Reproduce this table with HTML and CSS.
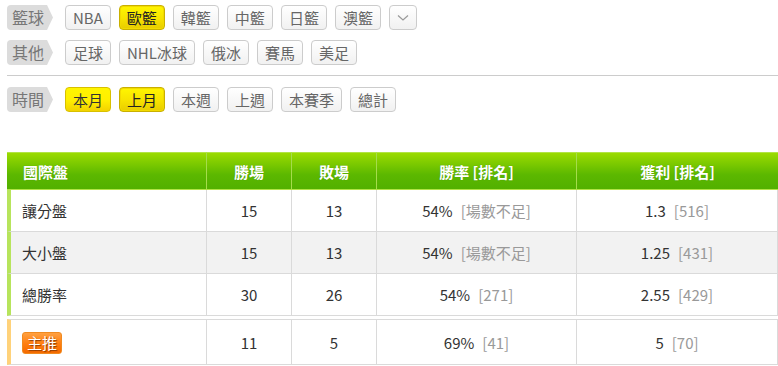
FILE: index.html
```html
<!DOCTYPE html>
<html lang="zh-Hant">
<head>
<meta charset="utf-8">
<link rel="stylesheet" href="styles.css">
</head>
<body>
<div class="filters">
  <div class="frow r1">
    <span class="lbl">籃球</span>
    <div class="btns">
      <span class="btn">NBA</span>
      <span class="btn on">歐籃</span>
      <span class="btn">韓籃</span>
      <span class="btn">中籃</span>
      <span class="btn">日籃</span>
      <span class="btn">澳籃</span>
      <span class="btn more"><svg width="12" height="8" viewBox="0 0 12 8"><path d="M1 1.5 L6 6 L11 1.5" fill="none" stroke="#999" stroke-width="1.2"/></svg></span>
    </div>
  </div>
  <div class="frow r2">
    <span class="lbl">其他</span>
    <div class="btns">
      <span class="btn">足球</span>
      <span class="btn">NHL冰球</span>
      <span class="btn">俄冰</span>
      <span class="btn">賽馬</span>
      <span class="btn">美足</span>
    </div>
  </div>
  <div class="divider"></div>
  <div class="frow r3">
    <span class="lbl">時間</span>
    <div class="btns">
      <span class="btn on2">本月</span>
      <span class="btn on">上月</span>
      <span class="btn">本週</span>
      <span class="btn">上週</span>
      <span class="btn">本賽季</span>
      <span class="btn">總計</span>
    </div>
  </div>
</div>

<table class="stats">
  <colgroup><col class="c1"><col class="c2"><col class="c3"><col class="c4"><col class="c5"></colgroup>
  <thead>
    <tr><th class="first">國際盤</th><th>勝場</th><th>敗場</th><th>勝率 [排名]</th><th class="last">獲利 [排名]</th></tr>
  </thead>
  <tbody>
    <tr><td class="name">讓分盤</td><td>15</td><td>13</td><td>54%<span class="rk">[場數不足]</span></td><td>1.3<span class="rk">[516]</span></td></tr>
    <tr class="alt"><td class="name">大小盤</td><td>15</td><td>13</td><td>54%<span class="rk">[場數不足]</span></td><td>1.25<span class="rk">[431]</span></td></tr>
    <tr><td class="name">總勝率</td><td>30</td><td>26</td><td>54%<span class="rk">[271]</span></td><td>2.55<span class="rk">[429]</span></td></tr>
  </tbody>
</table>
<table class="stats pick">
  <colgroup><col class="c1"><col class="c2"><col class="c3"><col class="c4"><col class="c5"></colgroup>
  <tbody>
    <tr><td class="name"><span class="badge">主推</span></td><td>11</td><td>5</td><td>69%<span class="rk">[41]</span></td><td>5<span class="rk">[70]</span></td></tr>
  </tbody>
</table>
</body>
</html>
```
FILE: styles.css
```css
html, body { margin: 0; padding: 0; background: #fff; }
body {
  font-family: "Noto Sans CJK TC", "Noto Sans", sans-serif;
  color: #333;
  width: 778px;
  overflow: hidden;
}
.filters { padding-left: 7px; padding-top: 5px; }
.frow { display: flex; align-items: center; height: 25px; }
.r2 { margin-top: 10px; }
.r3 { margin-top: 11px; }
.divider { height: 1px; background: #ccc; margin-top: 10px; }
.lbl {
  width: 41px;
  height: 25px;
  padding-left: 5px;
  background: #dcdcdc;
  border-radius: 4px;
  clip-path: polygon(0 0, 40px 0, 46px 50%, 40px 100%, 0 100%);
  color: #777;
  font-size: 16px;
  line-height: 25px;
  margin-right: 12px;
}
.btns { display: flex; gap: 8px; }
.btn {
  height: 23px;
  line-height: 23px;
  padding: 0 7px;
  border: 1px solid #ccc;
  border-radius: 4px;
  background: linear-gradient(#ffffff, #f1f1f1);
  color: #666;
  font-size: 15px;
}
.btn.on {
  border-color: #c9b000;
  background: linear-gradient(#fff600, #f7e200 55%, #e8cc00);
  color: #222;
  box-shadow: inset 0 0 0 1px #f2da00;
}
.btn.on2 {
  border-color: #d8c000;
  background: linear-gradient(#fff500 0%, #ffee00 55%, #f2d200 100%);
  color: #333;
}
.btn.more {
  width: 12px;
  display: flex;
  align-items: center;
  justify-content: center;
}
.stats {
  margin-left: 7px;
  width: 771px;
  table-layout: fixed;
  border-collapse: separate;
  border-spacing: 0;
  font-size: 15px;
  margin-top: 40px;
}
.stats.pick { margin-top: 3px; }
.c1 { width: 200px; }
.c2 { width: 85px; }
.c3 { width: 85px; }
.c4 { width: 200px; }
.c5 { width: 201px; }
.stats th {
  height: 36px;
  box-sizing: content-box;
  background: linear-gradient(#9bdb00, #5cb800 60%, #52b000);
  border-top: 1px solid #b2e446;
  border-bottom: 1px solid #b2e446;
  border-right: 1px solid #a5dc4c;
  color: #fff;
  font-weight: bold;
  text-align: center;
  padding: 0;
  text-shadow: 0 0 1px rgba(40, 90, 0, 0.4);
}
.stats th.first { text-align: left; padding-left: 16px; }
.stats th.last { border-right: none; }
.stats td {
  height: 41px;
  box-sizing: content-box;
  border-right: 1px solid #dadada;
  border-bottom: 1px solid #dadada;
  text-align: center;
  padding: 0;
  color: #333;
}
.stats tr.alt td { background: #f2f2f2; }
.stats td.name {
  text-align: left;
  padding-left: 11px;
  border-left: 4px solid #b7e45c;
}
.stats.pick td { height: 44px; border-top: 1px solid #dadada; }
.stats.pick td.name { border-left: 4px solid #ffd27a; }
.rk { color: #999; margin-left: 8px; }
.badge {
  display: inline-block;
  height: 20px;
  line-height: 20px;
  padding: 0 4px;
  border: 1px solid #f08a20;
  border-radius: 3px;
  background: linear-gradient(#ffa040, #ff7e10 55%, #f46a00);
  color: #fff;
  font-size: 15px;
  text-shadow: 1px 1px 1px #8a3a00;
  vertical-align: middle;
}
```
